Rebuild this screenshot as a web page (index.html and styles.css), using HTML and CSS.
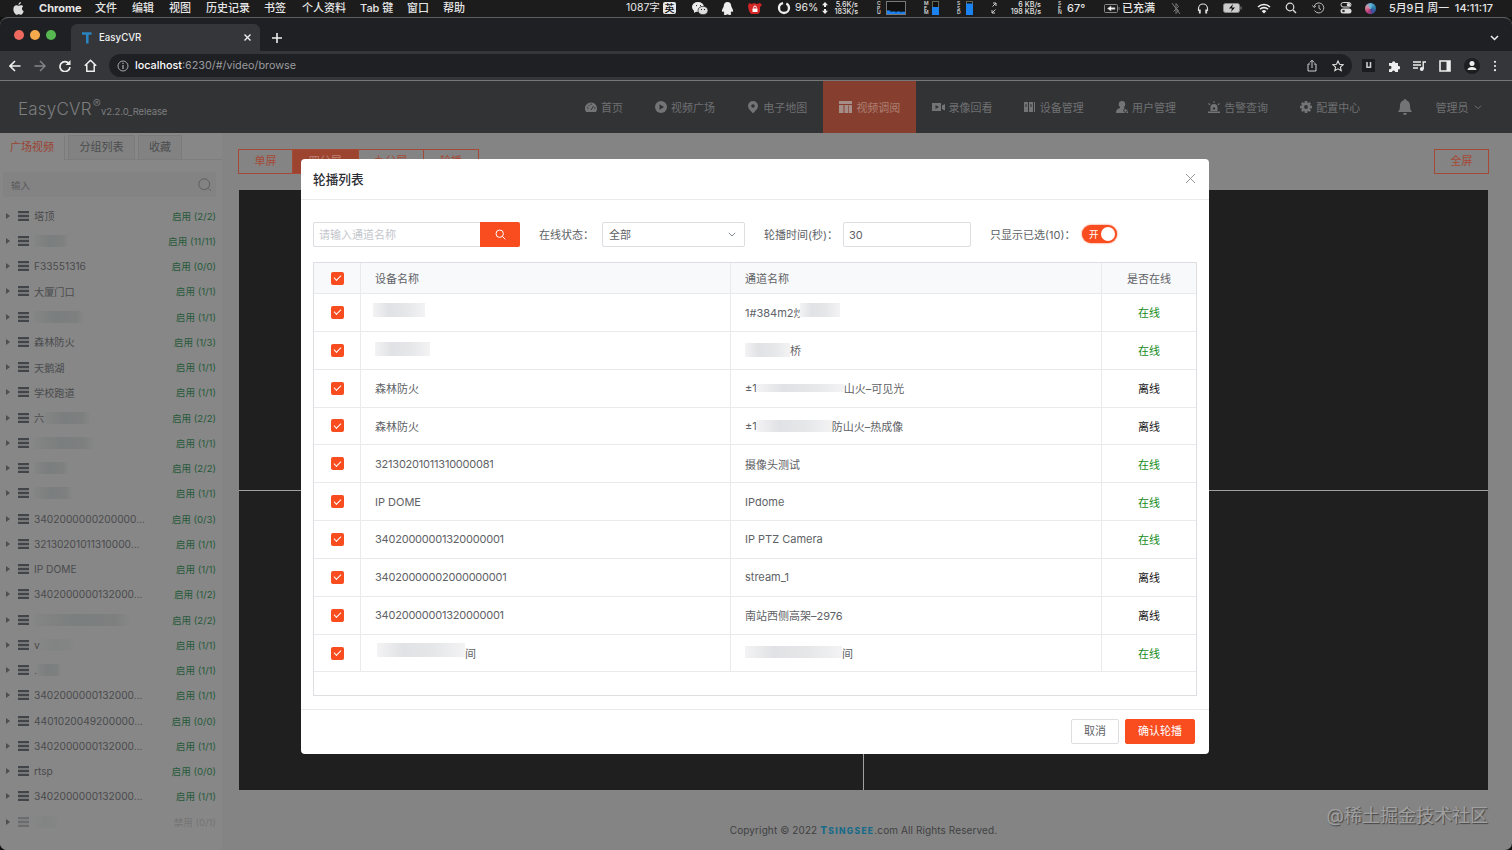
FILE: index.html
```html
<!DOCTYPE html>
<html lang="zh-CN">
<head>
    <meta charset="UTF-8">
    <meta name="viewport" content="width=device-width, initial-scale=1.0">
    <title>EasyCVR</title>
    <link rel="stylesheet" href="styles.css">
</head>
<body>
    <!-- macOS menu bar -->
    <div class="menubar">
        <svg class="apple" viewBox="0 0 12 14"><path d="M8.600 0C8.700 1.500 7.400 3 5.900 3 5.800 1.600 7.200.2 8.600 0zM8.700 3.500c1 0 1.900.5 2.400 1.300-2 1.300-1.600 4.100.6 4.900C11 11.900 9.800 13.800 8.500 13.800c-.9 0-1.200-.5-2.200-.5s-1.400.5-2.200.5C2.500 13.800.4 10.500.4 7.700c0-2.700 1.700-4.200 3.400-4.200 1 0 1.800.6 2.500.6.6 0 1.500-.6 2.400-.6z" fill="#ddd"/></svg>
        <b>Chrome</b>
        <span>文件</span><span>编辑</span><span>视图</span><span>历史记录</span><span>书签</span><span>个人资料</span><span>Tab 键</span><span>窗口</span><span>帮助</span>
        <span class="light">1087字</span>
        <span class="ime">英</span>
        <svg width="16" height="13" viewBox="0 0 16 13"><ellipse cx="6" cy="5" rx="6" ry="5" fill="#eee"/><path d="M2 8l0 3 3-2z" fill="#eee"/><ellipse cx="11" cy="8.500" rx="5" ry="4.200" fill="#ddd" stroke="#1d1d1d" stroke-width=".7"/><path d="M4 3.600h1M8 3.600h1M9 7.500h1M12 7.500h1" stroke="#222"/></svg>
        <svg width="13" height="13" viewBox="0 0 13 13"><path d="M6.500 0C9 0 10.300 2 10.300 4.500c1 1.800 2 3.500 1.800 5.100-.4.600-.9 0-1.400-.7-.2.900-.6 1.600-1.200 2.100.8.500 1 1.400.2 1.700-1 .4-2.400.1-3.200-.4-.8.500-2.200.8-3.200.4-.8-.3-.6-1.200.2-1.700-.6-.5-1-1.200-1.200-2.100-.5.700-1 1.300-1.400.7-.2-1.600.8-3.300 1.800-5.100C2.700 2 4 0 6.500 0z" fill="#eee"/></svg>
        <svg width="14" height="13" viewBox="0 0 14 13"><path d="M1 1l3 1 2-1 3 1 3-1 2 2-2 2v5l-2 2H3L1 9 0 4z" fill="#d42525"/><path d="M4.500 6.500h5V10h-5z" fill="#fff"/><path d="M5.700 6.500V5.300a1.300 1.300 0 012.600 0v1.200" fill="none" stroke="#fff"/></svg>
        <svg width="14" height="14" viewBox="0 0 14 14"><circle cx="7" cy="7" r="5" fill="none" stroke="#eee" stroke-width="2.300" stroke-dasharray="28 3.400" stroke-dashoffset="6"/></svg>
        <span class="light">96%</span>
        <svg width="8" height="14" viewBox="0 0 8 14"><path d="M4 1L1 4.300h2V6h2V4.300h2zM4 13L1 9.700h2V8h2v1.700h2z" fill="#eee"/></svg>
        <span class="tiny">5.6K/s<br>183K/s</span>
        <span class="stack">C<br>P<br>U</span>
        <svg width="20" height="14" viewBox="0 0 20 14"><rect x=".5" y=".5" width="19" height="13" fill="#111" stroke="#777"/><path d="M1 9.500h3.500v1.500h1v-.5h4v1h1v-1h4v1h.8v-.8H19V13H1z" fill="#1b82f0"/></svg>
        <span class="stack">M<br>E<br>M</span>
        <svg width="7" height="14" viewBox="0 0 7 14"><rect x=".5" y=".5" width="6" height="13" fill="#111" stroke="#665"/><path d="M0 6h7v8H0z" fill="#1b82f0"/></svg>
        <span class="stack">S<br>S<br>D</span>
        <svg width="7" height="14" viewBox="0 0 7 14"><rect x=".5" y=".5" width="6" height="13" fill="#111" stroke="#665"/><path d="M0 2.500h7V14H0z" fill="#1b82f0"/></svg>
        <svg width="6" height="12" viewBox="0 0 6 12"><path d="M1.500 4.500L5 1M2 1h3v3M4.500 7.500L1 11M1 8v3h3" stroke="#ccc" fill="none"/></svg>
        <span class="tiny kb">6 KB/s<br>198 KB/s</span>
        <span class="stack">S<br>E<br>N</span>
        <span>67°</span>
        <svg width="16" height="9" viewBox="0 0 16 9"><rect x=".5" y=".5" width="13" height="8" rx="1" fill="none" stroke="#888"/><path d="M3.500 4.500L7 2v1.700h4v1.600H7V7zM15 3v3" fill="#fff" stroke="#aaa" stroke-width=".6"/></svg>
        <span>已充满</span>
        <svg width="10" height="13" viewBox="0 0 10 13"><path d="M2.500 3.500l5 5L5 11.500v-10l2.500 3-5 5M1 1l8 11" fill="none" stroke="#777"/></svg>
        <svg width="12" height="13" viewBox="0 0 12 13"><path d="M1.500 9V6.500a4.500 4.500 0 019 0V9" fill="none" stroke="#ddd" stroke-width="1.200"/><path d="M2.800 7.500v4M9.200 7.500v4" stroke="#ddd" stroke-width="1.900"/></svg>
        <svg width="19" height="10" viewBox="0 0 19 10"><rect x=".5" y=".5" width="16" height="9" rx="2" fill="#ccc" stroke="#888"/><path d="M10 1L6 5.500h3L8 9l4-4.500H9z" fill="#111"/><path d="M18 3.500v3" stroke="#888"/></svg>
        <svg width="14" height="11" viewBox="0 0 14 11"><path d="M1 4a8.500 8.500 0 0112 0M3 6.300a5.600 5.600 0 018 0" fill="none" stroke="#eee" stroke-width="1.600"/><path d="M7 10.500L4.700 8.200a3.200 3.200 0 014.600 0z" fill="#eee"/></svg>
        <svg width="12" height="12" viewBox="0 0 12 12"><circle cx="5" cy="5" r="3.800" fill="none" stroke="#ddd" stroke-width="1.200"/><path d="M8 8l3 3" stroke="#ddd" stroke-width="1.400"/></svg>
        <svg width="13" height="12" viewBox="0 0 13 12"><path d="M2 4.500A5 5 0 112.500 8.500M.5 3.500L2 5.500l2-1.500M7 3v3.500l2 1" fill="none" stroke="#bbb"/></svg>
        <svg width="12" height="12" viewBox="0 0 12 12"><rect x="1" y=".5" width="10" height="4.500" rx="2.200" fill="none" stroke="#ddd"/><circle cx="8.500" cy="2.800" r="1.800" fill="#ddd"/><rect x=".5" y="6.500" width="11" height="5" rx="2.500" fill="#ddd"/><circle cx="3.500" cy="9" r="1.300" fill="#333"/></svg>
        <span class="siri"></span>
        <span class="clock">5月9日 周一&nbsp; 14:11:17</span>
    </div>

    <div class="window">
        <!-- Browser tabs -->
        <div class="tabstrip">
            <i class="dot red"></i><i class="dot yellow"></i><i class="dot green"></i>
            <div class="tab">
                <svg width="11" height="12" viewBox="0 0 11 12"><path d="M1 1.500h9.500M6.300 2v9.500" stroke="#2a84c0" stroke-width="2.600" fill="none"/></svg>
                <span>EasyCVR</span>
                <svg width="7" height="7" viewBox="0 0 7 7"><path d="M.5.5l6 6M6.500.5l-6 6" stroke="#eee" stroke-width="1.400"/></svg>
            </div>
            <svg class="plus" width="10" height="10" viewBox="0 0 10 10"><path d="M5 0v10M0 5h10" stroke="#eee" stroke-width="1.600"/></svg>
            <svg class="down" width="9" height="6" viewBox="0 0 9 6"><path d="M1 1l3.500 3.500L8 1" stroke="#eee" stroke-width="1.500" fill="none"/></svg>
        </div>

        <!-- Address bar -->
        <div class="toolbar">
            <svg width="12" height="12" viewBox="0 0 12 12"><path d="M11.500 6H1.500M6 1L1 6l5 5" fill="none" stroke="#eee" stroke-width="1.600"/></svg>
            <svg width="12" height="12" viewBox="0 0 12 12"><path d="M.5 6h10M6 1l5 5-5 5" fill="none" stroke="#85868a" stroke-width="1.400"/></svg>
            <svg width="12" height="12" viewBox="0 0 12 12"><path d="M10 3.500A5 5 0 1011 7" fill="none" stroke="#eee" stroke-width="1.700"/><path d="M11.500 0v5h-5z" fill="#eee"/></svg>
            <svg width="13" height="13" viewBox="0 0 13 13"><path d="M.8 6.800L6.500 1.200l5.700 5.600M2.800 5.500v6.700h7.400V5.500" fill="none" stroke="#eee" stroke-width="1.500"/></svg>
            <div class="address">
                <svg width="12" height="12" viewBox="0 0 12 12"><circle cx="6" cy="6" r="5" fill="none" stroke="#a5a6aa"/><path d="M6 5v4M6 2.800v1.300" stroke="#a5a6aa" stroke-width="1.300"/></svg>
                <span class="url"><b>localhost</b>:6230/#/video/browse</span>
                <svg width="10" height="13" viewBox="0 0 10 13"><path d="M3 5H1v7h8V5H7M5 9V1.500M2.700 3.500L5 1.200l2.300 2.300" fill="none" stroke="#ccc"/></svg>
                <svg width="12" height="12" viewBox="0 0 12 12"><path d="M6 1l1.500 3.300 3.600.4-2.700 2.400.8 3.600L6 8.800l-3.200 1.900.8-3.600L.9 4.700l3.600-.4z" fill="none" stroke="#ddd" stroke-width="1.100"/></svg>
            </div>
            <div class="exts">
                <svg width="13" height="13" viewBox="0 0 13 13"><path d="M0 0h13v13H0z" fill="#1b1c1f"/><path d="M5 3v6M8.500 3v6M5 8.300h3.500" stroke="#ccc" stroke-width="1.600"/></svg>
                <svg width="12" height="12" viewBox="0 0 12 12"><path d="M1 3h3a1.700 1.700 0 113.400 0H10v3a1.700 1.700 0 110 3.300V12H7.200a1.600 1.600 0 10-3.200 0H1V9a1.700 1.700 0 100-3z" fill="#eee"/></svg>
                <svg width="13" height="12" viewBox="0 0 13 12"><path d="M0 2h8M0 5h8M0 8h5M10.200 9V2H13" stroke="#eee" stroke-width="1.400" fill="none"/><circle cx="8.800" cy="9" r="1.900" fill="#eee"/></svg>
                <svg width="12" height="12" viewBox="0 0 12 12"><path d="M1 1h10v10H1z" fill="none" stroke="#eee" stroke-width="1.600"/><path d="M7.500 1h3.500v10H7.500z" fill="#eee"/></svg>
                <svg width="16" height="16" viewBox="0 0 16 16"><circle cx="8" cy="8" r="8" fill="#1d1e21"/><circle cx="8" cy="5.500" r="2.500" fill="#eee"/><path d="M3.500 12c0-4 9-4 9 0z" fill="#eee"/></svg>
                <svg width="4" height="12" viewBox="0 0 4 12"><circle cx="2" cy="1.800" r="1.100" fill="#eee"/><circle cx="2" cy="6" r="1.100" fill="#eee"/><circle cx="2" cy="10.200" r="1.100" fill="#eee"/></svg>
            </div>
        </div>

        <!-- App header -->
        <div class="header">
            <div class="logo">EasyCVR<sup>®</sup><small>v2.2.0_Release</small></div>
            <div class="nav">
                <div class="nav-item home"><svg viewBox="0 0 12 12"><path d="M.2 9A6 6 0 1111.800 9L11 11H1z"/><path class="cut" d="M6 9l2.500-4M2 7h1.500M3.500 4l1 1M6 2.500V4M9 7h1.500"/></svg>首页</div>
                <div class="nav-item"><svg viewBox="0 0 12 12"><circle cx="6" cy="6" r="6"/><path class="hole" d="M4.500 3.300v5.400L9 6z"/></svg>视频广场</div>
                <div class="nav-item"><svg viewBox="0 0 12 12"><path d="M6 0a5 5 0 015 5c0 3-3 5-5 7.500C4 10 1 8 1 5a5 5 0 015-5z"/><circle class="hole" cx="6" cy="5" r="1.800"/></svg>电子地图</div>
                <div class="nav-item active"><svg class="wide" viewBox="0 0 13 12"><path d="M0 0h13v3H0zM0 4h4.500v8H0zM5.500 4H13v8H5.500z"/><path class="line" d="M9.500 4.500V12"/></svg>视频调阅</div>
                <div class="nav-item"><svg class="wide" viewBox="0 0 13 12"><path d="M0 2h9v8H0zM10 4.500L13 3v6.500L10 8z"/><path class="hole" d="M3.500 4v4L7 6z"/></svg>录像回看</div>
                <div class="nav-item"><svg viewBox="0 0 12 12"><path d="M0 1h4v10H0zM5 1h4v10H5zM10 1h1v10h-1z"/><path class="cut" d="M2 3v3M7 3v3"/></svg>设备管理</div>
                <div class="nav-item"><svg viewBox="0 0 12 12"><circle cx="6" cy="3.200" r="3.200"/><path d="M4 5h4v2l4 2v3H0C0 9 1 8 4 7z"/><circle class="cut" cx="9.500" cy="9.500" r="1.800"/></svg>用户管理</div>
                <div class="nav-item"><svg viewBox="0 0 12 12"><path d="M2.500 10V6.500a3.500 3.500 0 017 0V10zM0 10.500h12V12H0zM5.500 0h1v2h-1zM0 3l1-1 1.500 1.500-.7.700zM12 3l-1-1-1.500 1.500.7.700z"/><circle class="hole" cx="6" cy="7.500" r="1.200"/></svg>告警查询</div>
                <div class="nav-item"><svg viewBox="0 0 12 12"><circle cx="6" cy="6" r="4.600"/><path d="M4.700 0h2.600v12H4.700zM0 4.700h12v2.600H0zM.9 2.700l1.800-1.800 8.400 8.400-1.800 1.800zM9.300.9l1.800 1.800-8.400 8.400L.9 9.300z"/><circle class="hole" cx="6" cy="6" r="1.900"/></svg>配置中心</div>
            </div>
            <svg class="bell" viewBox="0 0 14 16"><path d="M7 0a1.200 1.200 0 011.200 1.300C10.800 2 12 4 12 6.500c0 3.500.7 5 2 6.500H0c1.300-1.500 2-3 2-6.500C2 4 3.200 2 5.800 1.300A1.200 1.200 0 017 0zM5 14h4a2 2 0 01-4 0z" fill="#737476"/></svg>
            <span class="admin">管理员</span>
            <svg width="8" height="5" viewBox="0 0 8 5"><path d="M1 .7L4 3.700l3-3" stroke="#737476" fill="none"/></svg>
        </div>

        <div class="main">
            <!-- Device tree -->
            <div class="sidebar">
                <div class="side-tabs"><span class="on">广场视频</span><span>分组列表</span><span>收藏</span></div>
                <div class="side-search">输入<svg width="14" height="14" viewBox="0 0 14 14"><circle cx="6.200" cy="6.200" r="5.400" fill="none" stroke="#5d5f61"/><path d="M10.500 10.500l2.500 2.500" stroke="#5d5f61"/></svg></div>
                <div class="tree">
                    <div class="node"><i></i><em></em><span>塔顶</span><b>启用 (2/2)</b></div>
                    <div class="node"><i></i><em></em><span><u class="blot w34"></u></span><b>启用 (11/11)</b></div>
                    <div class="node"><i></i><em></em><span>F33551316</span><b>启用 (0/0)</b></div>
                    <div class="node"><i></i><em></em><span>大厦门口</span><b>启用 (1/1)</b></div>
                    <div class="node"><i></i><em></em><span><u class="blot w50"></u></span><b>启用 (1/1)</b></div>
                    <div class="node"><i></i><em></em><span>森林防火</span><b>启用 (1/3)</b></div>
                    <div class="node"><i></i><em></em><span>天鹅湖</span><b>启用 (1/1)</b></div>
                    <div class="node"><i></i><em></em><span>学校跑道</span><b>启用 (1/1)</b></div>
                    <div class="node"><i></i><em></em><span>六<u class="blot w46"></u></span><b>启用 (2/2)</b></div>
                    <div class="node"><i></i><em></em><span><u class="blot w60"></u></span><b>启用 (1/1)</b></div>
                    <div class="node"><i></i><em></em><span><u class="blot w34"></u></span><b>启用 (2/2)</b></div>
                    <div class="node"><i></i><em></em><span><u class="blot w38"></u></span><b>启用 (1/1)</b></div>
                    <div class="node"><i></i><em></em><span>3402000000200000...</span><b>启用 (0/3)</b></div>
                    <div class="node"><i></i><em></em><span>32130201011310000...</span><b>启用 (1/1)</b></div>
                    <div class="node"><i></i><em></em><span>IP DOME</span><b>启用 (1/1)</b></div>
                    <div class="node"><i></i><em></em><span>3402000000132000...</span><b>启用 (1/2)</b></div>
                    <div class="node"><i></i><em></em><span><u class="blot w96"></u></span><b>启用 (2/2)</b></div>
                    <div class="node"><i></i><em></em><span>v<u class="blot w34 faint"></u></span><b>启用 (1/1)</b></div>
                    <div class="node"><i></i><em></em><span>.<u class="blot w24"></u></span><b>启用 (1/1)</b></div>
                    <div class="node"><i></i><em></em><span>3402000000132000...</span><b>启用 (1/1)</b></div>
                    <div class="node"><i></i><em></em><span>4401020049200000...</span><b>启用 (0/0)</b></div>
                    <div class="node"><i></i><em></em><span>3402000000132000...</span><b>启用 (1/1)</b></div>
                    <div class="node"><i></i><em></em><span>rtsp</span><b>启用 (0/0)</b></div>
                    <div class="node"><i></i><em></em><span>3402000000132000...</span><b>启用 (1/1)</b></div>
                    <div class="node off"><i></i><em></em><span><u class="blot w24 faint"></u></span><b>禁用 (0/1)</b></div>
                </div>
            </div>

            <!-- Video wall -->
            <div class="content">
                <div class="split-bar">
                    <div class="split"><span>单屏</span><span class="on">四分屏</span><span>九分屏</span><span>轮播</span></div>
                    <span class="full">全屏</span>
                </div>
                <div class="wall"><div></div><div></div><div></div><div></div></div>
                <div class="copyright">Copyright © 2022 <span class="brand"><big>T</big>SINGSEE</span>.com All Rights Reserved.</div>
            </div>
        </div>
    </div>

    <!-- Carousel list dialog -->
    <div class="modal">
        <div class="modal-head">轮播列表<svg width="11" height="11" viewBox="0 0 11 11"><path d="M1 1l9 9M10 1l-9 9" stroke="#999" fill="none"/></svg></div>
        <div class="modal-body">
            <div class="filters">
                <div class="search"><span>请输入通道名称</span><div class="search-btn"><svg width="11" height="11" viewBox="0 0 11 11"><circle cx="4.700" cy="4.700" r="3.700" fill="none" stroke="#fff"/><path d="M7.500 7.500l2.800 2.800" stroke="#fff"/></svg></div></div>
                <label class="l-state">在线状态：</label>
                <div class="select">全部<svg width="8" height="5" viewBox="0 0 8 5"><path d="M.8.800L4 4 7.200.800" stroke="#808695" fill="none"/></svg></div>
                <label class="l-time">轮播时间(秒)：</label>
                <div class="number">30</div>
                <label class="l-only">只显示已选(10)：</label>
                <div class="switch">开<i></i></div>
            </div>
            <div class="table">
                <div class="tr th"><div><i class="check"></i></div><div>设备名称</div><div>通道名称</div><div>是否在线</div></div>
                <div class="tr"><div><i class="check"></i></div><div><u class="blur a1"></u></div><div>1#384m2炒<u class="blur a2"></u></div><div class="up">在线</div></div>
                <div class="tr"><div><i class="check"></i></div><div><u class="blur b1"></u></div><div><u class="blur b2"></u>桥</div><div class="up">在线</div></div>
                <div class="tr"><div><i class="check"></i></div><div>森林防火</div><div>±1<u class="blur c2"></u>山火–可见光</div><div class="down-text">离线</div></div>
                <div class="tr"><div><i class="check"></i></div><div>森林防火</div><div>±1<u class="blur d2"></u>防山火–热成像</div><div class="down-text">离线</div></div>
                <div class="tr"><div><i class="check"></i></div><div class="num">32130201011310000081</div><div>摄像头测试</div><div class="up">在线</div></div>
                <div class="tr"><div><i class="check"></i></div><div>IP DOME</div><div>IPdome</div><div class="up">在线</div></div>
                <div class="tr"><div><i class="check"></i></div><div class="num">34020000001320000001</div><div>IP PTZ Camera</div><div class="up">在线</div></div>
                <div class="tr"><div><i class="check"></i></div><div class="num">34020000002000000001</div><div>stream_1</div><div class="down-text">离线</div></div>
                <div class="tr"><div><i class="check"></i></div><div class="num">34020000001320000001</div><div>南站西侧高架–2976</div><div class="down-text">离线</div></div>
                <div class="tr"><div><i class="check"></i></div><div><u class="blur e1"></u>间</div><div><u class="blur e2"></u>间</div><div class="up">在线</div></div>
            </div>
        </div>
        <div class="modal-foot"><span class="btn">取消</span><span class="btn primary">确认轮播</span></div>
    </div>

    <div class="watermark">@稀土掘金技术社区</div>
</body>
</html>
```
FILE: styles.css
```css
* {
    box-sizing: border-box;
}
body {
    margin: 0;
    width: 1512px;
    height: 850px;
    overflow: hidden;
    position: relative;
    background: #111;
    font-family: Inter, "Noto Sans CJK SC", sans-serif;
    font-size: 11px;
}
svg {
    flex: none;
}
i, em {
    font-style: normal;
}
u {
    text-decoration: none;
}

/* menu bar */
.menubar {
    height: 17px;
    padding-left: 13px;
    background: #1c1c1c;
    color: #e6e6e6;
    font-weight: 500;
    line-height: 16px;
    white-space: nowrap;
    display: grid;
    align-items: center;
    grid-template-columns: 26px 56px 37px 37px 37px 58px 38px 58px 47px 36px 183px 37px 29px 29px 27px 29px 18px 26px 12px 44px 9px 38px 8px 25px 9px 25px 16px 51px 9px 37px 18px 49px 26px 26px 34px 28px 27px 28px 25px 24px 1fr;
    grid-template-rows: 16px;
}
.apple {
    width: 11px;
    height: 13px;
}
.light {
    font-size: 10.5px;
    font-weight: 400;
}
.ime {
    width: 13px;
    height: 12px;
    border-radius: 2px;
    background: #e8e8e8;
    color: #111;
    font-size: 10px;
    line-height: 12px;
    text-align: center;
}
.tiny {
    width: 25px;
    font-size: 7.2px;
    line-height: 7px;
    text-align: right;
}
.kb {
    width: 34px;
}
.stack {
    font-size: 5px;
    line-height: 4.6px;
}
.siri {
    width: 11px;
    height: 11px;
    border-radius: 50%;
    background: conic-gradient(#66b8dc, #2c82ac, #3a4d9a, #c13a77, #d58a9b, #66b8dc);
}
.clock {
    font-size: 10.9px;
}

/* browser */
.window {
    height: 833px;
    border-top: 1px solid #5c5d5f;
    border-radius: 8px 8px 7px 7px;
    overflow: hidden;
    background: #848484;
}
.tabstrip {
    height: 33px;
    background: #1f2023;
    display: flex;
    align-items: center;
    padding: 0 13px;
}
.dot {
    width: 10px;
    height: 10px;
    border-radius: 50%;
    margin: 0 5px 0 1px;
}
.red { background: #ee6a5f; }
.yellow { background: #f4a94c; }
.green { background: #57b851; }
.tab {
    width: 189px;
    height: 27px;
    margin: 6px 0 0 10px;
    padding: 0 9px 0 10px;
    border-radius: 6px 6px 0 0;
    background: #35363a;
    color: #eee;
    display: flex;
    align-items: center;
    gap: 7px;
    font-size: 9.7px;
    font-weight: 500;
}
.tab span {
    flex: 1;
}
.plus {
    margin: 6px auto 0 12px;
}
.down {
    margin-top: 6px;
}
.toolbar {
    height: 30px;
    background: #35363a;
    border-bottom: 1px solid #777;
    padding: 0 15px 0 9px;
    display: flex;
    align-items: center;
    gap: 13px;
}
.address {
    width: 1243px;
    height: 23px;
    margin-left: -1px;
    padding: 0 8px;
    border-radius: 12px;
    background: #1f2023;
    color: #9a9b9f;
    display: flex;
    align-items: center;
    gap: 15px;
}
.url {
    flex: 1;
    margin-left: -9px;
    font-size: 10.8px;
}
.url b {
    font-weight: 500;
    color: #fff;
}
.exts {
    flex: 1;
    display: flex;
    align-items: center;
    justify-content: space-between;
    margin-left: -3px;
}

/* app header */
.header {
    height: 52px;
    background: #323335;
    color: #6f7072;
    display: flex;
    align-items: center;
    padding: 0 29px 0 18px;
}
.logo {
    width: 551px;
    margin-top: 4px;
    color: #7c7d7f;
    font-size: 17px;
    font-weight: 300;
    letter-spacing: .2px;
}
.logo sup {
    font-size: 12px;
    line-height: 0;
    margin-left: 1px;
}
.logo small {
    font-size: 9.5px;
    font-weight: 400;
    letter-spacing: -.1px;
}
.nav {
    display: flex;
    height: 52px;
}
.nav-item {
    width: 92.2px;
    padding-left: 16px;
    display: flex;
    align-items: center;
    gap: 4px;
    white-space: nowrap;
}
.nav-item.home {
    width: 70px;
}
.nav-item svg {
    width: 12px;
    height: 12px;
    fill: #737476;
}
.nav-item .wide {
    width: 13px;
}
.nav-item .hole {
    fill: #323335;
}
.nav-item .cut {
    fill: none;
    stroke: #323335;
}
.nav-item .line {
    stroke: #863f2f;
    stroke-width: .7;
}
.nav-item.active {
    background: #863f2f;
    color: #ae7f73;
}
.nav-item.active svg {
    fill: #a68e88;
}
.bell {
    width: 14px;
    height: 16px;
    margin-left: 21px;
}
.admin {
    margin: 0 5px 0 24px;
}

/* page */
.main {
    display: flex;
    height: 717px;
}
.sidebar {
    width: 222px;
    background: #878787;
}
.side-tabs {
    display: flex;
    gap: 3px;
    height: 27px;
    padding-top: 2px;
    border-bottom: 1px solid #7d7d7d;
    color: #4b4c4e;
}
.side-tabs span {
    width: 67px;
    height: 24px;
    line-height: 23px;
    text-align: center;
    background: #828282;
    border: 1px solid #7b7b7b;
    border-bottom: 0;
}
.side-tabs span:last-child {
    width: 44px;
}
.side-tabs .on {
    width: 65px;
    height: 25px;
    background: #878787;
    border-left: 0;
    border-color: #878787 #7b7b7b;
    color: #9b4333;
}
.side-search {
    height: 25px;
    margin: 12px 6px 6px 3px;
    padding: 0 4px 0 8px;
    display: flex;
    align-items: center;
    justify-content: space-between;
    background: #838383;
    color: #5a5b5d;
    font-size: 9.5px;
}
.node {
    height: 25.25px;
    display: flex;
    align-items: center;
    padding: 0 6px;
    color: #4a4b4d;
    font-size: 10.2px;
}
.node i {
    width: 4px;
    border: 3px solid transparent;
    border-left: 4px solid #4c4e50;
    border-right: 0;
    margin-right: 8px;
}
.node em {
    width: 11px;
    height: 10px;
    margin-right: 5px;
    background: repeating-linear-gradient(#414448 0 2px, #777 2px 4px);
}
.node span {
    flex: 1;
    display: flex;
    align-items: center;
    white-space: nowrap;
}
.node b {
    font-weight: 400;
    font-size: 9.6px;
    color: #265a3a;
}
.node.off b {
    color: #747474;
}
.node.off em {
    opacity: .4;
}
.blot {
    display: block;
    height: 12px;
    background: linear-gradient(90deg, #848585, #7b7e7e 45%, #7e8080 85%, #868686);
}
.faint { opacity: .4; }
.w24 { width: 24px; }
.w34 { width: 34px; }
.w38 { width: 38px; }
.w46 { width: 46px; }
.w50 { width: 50px; }
.w60 { width: 60px; }
.w96 { width: 96px; }

.content {
    flex: 1;
    padding: 16px 23px 0 16px;
}
.split-bar {
    display: flex;
    justify-content: space-between;
    height: 41px;
    color: #a54936;
    line-height: 23px;
    text-align: center;
}
.split {
    display: flex;
    height: 25px;
}
.split span, .full {
    width: 55px;
    height: 25px;
    border: 1px solid #a54936;
}
.split span + span {
    width: 65.5px;
    border-left: 0;
}
.split span:last-child {
    width: 55px;
}
.split .on {
    background: #9c4430;
    color: #bd8073;
}
.wall {
    height: 600px;
    margin: 0 1px;
    display: grid;
    grid-template-columns: 1fr 1fr;
    gap: 1px;
    background: #a0a0a0;
}
.wall div {
    background: #1f1f1f;
}
.copyright {
    margin-top: 33px;
    padding-right: 0;
    text-align: center;
    color: #404142;
    font-size: 10px;
    letter-spacing: .1px;
    line-height: 14px;
}
.brand {
    color: #176b88;
    font-size: 8.500px;
    font-weight: 800;
    letter-spacing: 1.3px;
}
.brand big {
    font-size: 10px;
}

/* dialog */
.modal {
    position: absolute;
    left: 301px;
    top: 159px;
    width: 908px;
    height: 595px;
    background: #fff;
    border-radius: 4px;
    color: #606266;
    display: flex;
    flex-direction: column;
}
.modal-head {
    height: 41px;
    padding: 0 13px 2px 12px;
    border-bottom: 1px solid #e8eaec;
    display: flex;
    align-items: center;
    justify-content: space-between;
    color: #2b2d33;
    font-size: 12.7px;
    font-weight: 500;
}
.modal-body {
    flex: 1;
    padding: 22px 12px 0;
}
.filters {
    height: 25px;
    display: flex;
    align-items: center;
    white-space: nowrap;
}
.filters label, .search span {
    padding-bottom: 2px;
}
.search {
    width: 207px;
    height: 25px;
    display: flex;
    justify-content: space-between;
    align-items: center;
    border: 1px solid #dcdee2;
    border-right: 0;
    border-radius: 2px;
    padding-left: 5px;
    color: #c3c6cc;
}
.search-btn {
    width: 40px;
    height: 25px;
    background: #f94d20;
    border-radius: 0 2px 2px 0;
    display: flex;
    align-items: center;
    justify-content: center;
}
.l-state {
    width: 82px;
    padding-left: 19px;
}
.l-time {
    width: 98px;
    padding-left: 19px;
}
.l-only {
    width: 111px;
    padding-left: 19px;
}
.select, .number {
    height: 25px;
    border: 1px solid #dcdee2;
    border-radius: 2px;
    padding: 0 8px 1px 6px;
    display: flex;
    align-items: center;
    justify-content: space-between;
}
.select {
    width: 143px;
}
.number {
    width: 128px;
    padding: 0 5px;
}
.switch {
    width: 35px;
    height: 18px;
    margin-bottom: 1px;
    padding: 0 2px 0 7px;
    border-radius: 9px;
    background: #f94d20;
    box-shadow: 0 0 2px #f94d20;
    color: #fff;
    font-size: 9.5px;
    display: flex;
    align-items: center;
    justify-content: space-between;
}
.switch i {
    width: 14px;
    height: 14px;
    border-radius: 50%;
    background: #fff;
}
.table {
    height: 434px;
    margin-top: 15px;
    border: 1px solid #dcdee2;
}
.tr {
    display: grid;
    grid-template-columns: 47px 370px 371px 1fr;
    height: 37.85px;
    border-bottom: 1px solid #e8eaec;
}
.tr > div {
    display: flex;
    align-items: center;
    padding-left: 14px;
    border-right: 1px solid #e8eaec;
}
.tr > div:first-child, .tr > div:last-child {
    justify-content: center;
    padding: 0;
}
.tr > div:last-child {
    border-right: 0;
}
.tr .num {
    letter-spacing: -.22px;
}
.th {
    height: 31px;
    background: #f8f9fa;
}
.up {
    color: #168c1c;
}
.down-text {
    color: #171717;
}
.check {
    width: 13px;
    height: 13px;
    border-radius: 2px;
    background: #f94d20;
    display: flex;
    align-items: center;
    justify-content: center;
}
.check::after {
    content: "";
    width: 6px;
    height: 3px;
    border: solid #fff;
    border-width: 0 0 1.6px 1.6px;
    transform: translateY(-1px) rotate(-45deg);
}
.blur {
    height: 14px;
    background: linear-gradient(90deg, #f3f3f4, #e1e2e5 30%, #e6e7e9 65%, #f3f3f4);
}
.a1 { width: 52px; margin: 0 0 5px -2px; }
.a2 { width: 40px; margin: 0 0 4px -5px; }
.b1 { width: 55px; margin-bottom: 3px; }
.b2 { width: 45px; }
.c2 { width: 87px; height: 8px; }
.d2 { width: 75px; height: 12px; }
.e1 { width: 88px; margin: 0 0 7px 2px; }
.e2 { width: 97px; height: 12px; margin-bottom: 2px; }
.modal-foot {
    height: 45px;
    padding: 9px 14px 0 0;
    border-top: 1px solid #e8eaec;
    display: flex;
    justify-content: flex-end;
    gap: 6px;
}
.btn {
    width: 48px;
    height: 25px;
    line-height: 23px;
    text-align: center;
    border: 1px solid #dcdee2;
    border-radius: 2px;
}
.primary {
    width: 70px;
    background: #f94d20;
    border-color: #f94d20;
    color: #fff;
}

.watermark {
    position: absolute;
    right: 24px;
    top: 803px;
    color: #a0a0a0;
    font-size: 18px;
    line-height: 26px;
    text-shadow: 1px 1px 1px #444;
}
```
